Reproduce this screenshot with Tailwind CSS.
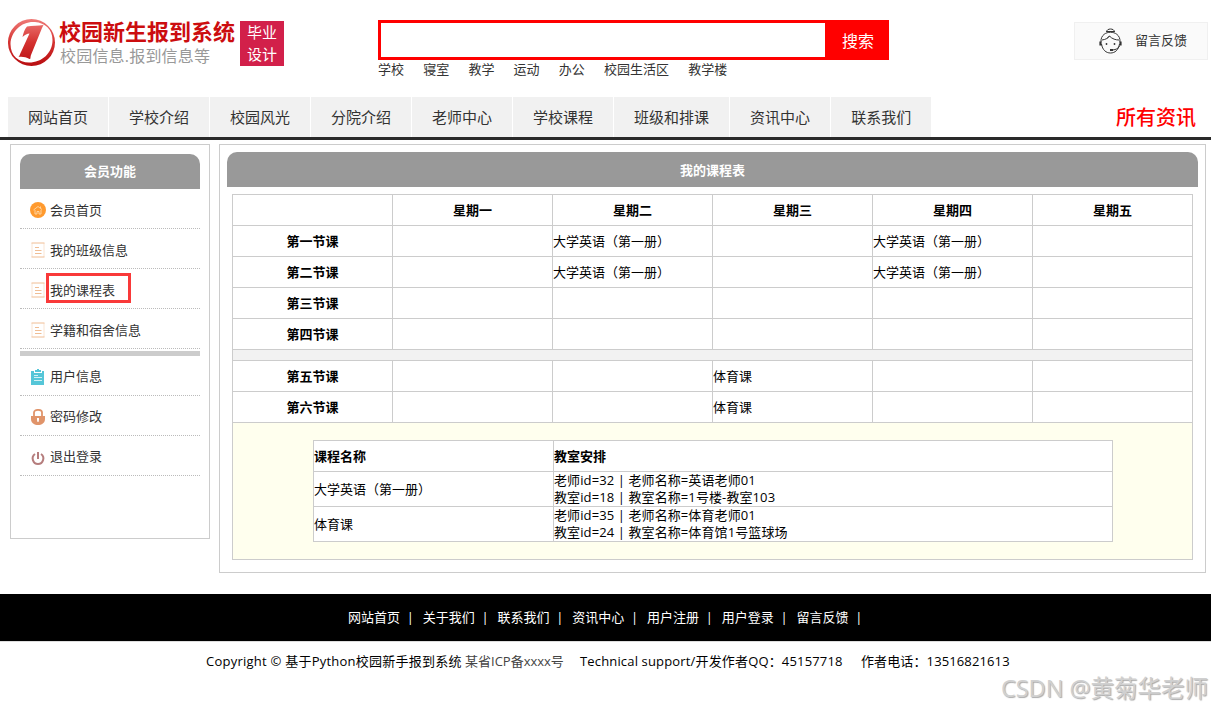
<!DOCTYPE html>
<html lang="zh-CN">
<head>
    <meta charset="UTF-8">
    <meta name="viewport" content="width=device-width, initial-scale=1.0">
    <title>校园新生报到系统</title>
    <script src="https://cdn.jsdelivr.net/npm/@tailwindcss/browser@4"></script>
</head>
<body class="h-[708px] bg-white text-black text-[13px] leading-[17px] font-['Open_Sans','Noto_Sans_CJK_SC',sans-serif] overflow-hidden">

    <!-- Header -->
    <header class="h-[97px] flex items-start pl-2 pr-[3px]">
        <a href="#" class="flex w-[370px] pt-[19px]">
            <svg class="w-12 h-12 shrink-0" viewBox="0 0 48 48">
                <defs>
                    <linearGradient id="logo-red" gradientUnits="userSpaceOnUse" x1="0" y1="0" x2="0" y2="47">
                        <stop offset="0" stop-color="#ef7b78"/>
                        <stop offset="0.5" stop-color="#d43230"/>
                        <stop offset="1" stop-color="#b80d10"/>
                    </linearGradient>
                </defs>
                <path fill="url(#logo-red)" fill-rule="evenodd" d="M23.500 0A23.500 23.500 0 1 1 23.500 47A23.500 23.500 0 1 1 23.500 0ZM27 3C14 2 3 12 2.500 25C2.500 37 11 43.500 21 43.500C34 43.500 44.500 34 44.500 21C44.500 10 37 4 27 3Z"/>
                <path fill="url(#logo-red)" d="M19 7.500C24 6.500 30 7 35.500 6C34.500 8 34 9 33 11.500L23 36C22 39 23 40 21.500 40C18 38 14 37.500 10.500 38C12 36 12 35 13 33L21.500 14.500C19 14.500 17 16 14.500 18C15.500 14 16.500 10 19 7.500Z"/>
            </svg>
            <div class="ml-[3px] w-[181px] whitespace-nowrap">
                <div class="text-[22px] leading-[24px] font-bold text-[#cc0d0f]">校园新生报到系统</div>
                <div class="ml-px text-[16px] leading-[26px] tracking-[0.2px] text-[#999]">校园信息.报到信息等</div>
            </div>
            <div class="mt-[2px] w-[44px] h-[45px] bg-[#d2204a] text-white text-[15px] leading-[22px] text-center">毕业<br>设计</div>
        </a>
        <div class="w-[511px] pt-5">
            <div class="flex h-10">
                <input type="text" class="w-[447px] border-[3px] border-r-0 border-[#f00] outline-none">
                <button class="w-16 pl-[2px] pt-[2px] bg-[#f00] text-white text-[16px]">搜索</button>
            </div>
            <div class="flex gap-[19.200px] text-[#333] leading-[18px]">
                <a href="#">学校</a>
                <a href="#">寝室</a>
                <a href="#">教学</a>
                <a href="#">运动</a>
                <a href="#">办公</a>
                <a href="#">校园生活区</a>
                <a href="#">教学楼</a>
            </div>
        </div>
        <a href="#" class="ml-auto mt-[22px] w-[134px] h-[38px] flex items-center bg-[#fafafa] border border-[#f0f0f0] pl-6 pb-px text-[#333]">
            <svg class="w-[23px] h-[26px] mr-[13px]" viewBox="0 0 23 26" fill="none" stroke="#333" stroke-width="1">
                <path d="M7.500 4C7.500 0 15.500 0 15.500 4M7.500 3.500H15.500"/>
                <path d="M2 14C1 1 22 1 21 14M2.500 16C3.500 22 7 25 11.500 25S19.500 22 20.500 16"/>
                <path d="M3 12C7 11.500 9 10 10.500 8C13 11 17 12 20 12M8 10.500L10.500 8"/>
                <path d="M1.500 13.500V17.500M21.500 13.500V17.500" stroke-width="2.200"/>
                <path d="M20.500 18C19 21 16 22 12.500 22"/>
                <path d="M11 22H14" stroke-width="2"/>
                <circle cx="7.500" cy="16" r="0.900" fill="#333" stroke="none"/>
                <circle cx="15.500" cy="16" r="0.900" fill="#333" stroke="none"/>
            </svg>
            留言反馈
        </a>
    </header>

    <!-- Main nav -->
    <nav class="h-[43px] flex gap-px pl-2 pr-[15px] border-b-[3px] border-[#2a2a2a] text-[15px] leading-[40px] text-[#333]">
        <a href="#" class="px-5 bg-[#f1f1f1]">网站首页</a>
        <a href="#" class="px-5 bg-[#f1f1f1]">学校介绍</a>
        <a href="#" class="px-5 bg-[#f1f1f1]">校园风光</a>
        <a href="#" class="px-5 bg-[#f1f1f1]">分院介绍</a>
        <a href="#" class="px-5 bg-[#f1f1f1]">老师中心</a>
        <a href="#" class="px-5 bg-[#f1f1f1]">学校课程</a>
        <a href="#" class="px-5 bg-[#f1f1f1]">班级和排课</a>
        <a href="#" class="px-5 bg-[#f1f1f1]">资讯中心</a>
        <a href="#" class="px-5 bg-[#f1f1f1]">联系我们</a>
        <a href="#" class="ml-auto text-[20px] leading-[42px] font-medium text-[#f00]">所有资讯</a>
    </nav>

    <main class="flex items-start gap-[9px] pl-[10px] pt-1 h-[454px]">
        <!-- Member menu -->
        <aside class="w-[200px] h-[395px] border border-[#ccc] px-[9px] pt-[9px] text-[#333]">
            <h2 class="h-[35px] rounded-t-[10px] bg-[#999] text-white font-bold text-center leading-[35px]">会员功能</h2>
            <a href="#" class="flex items-center h-10 pl-[10px] pt-[3px] border-b border-dotted border-[#bbb]">
                <svg class="w-4 h-4 mr-1" viewBox="0 0 16 16">
                    <circle cx="8" cy="8" r="8" fill="#ff9a2e"/>
                    <path d="M3.500 8L8 4.500L12 7.500M5 8V12H7V9.500H9V12H11V8M10.500 6V4.500" fill="none" stroke="#ffd9a8" stroke-width="0.900"/>
                </svg>
                会员首页
            </a>
            <a href="#" class="flex items-center h-10 pl-[10px] pt-[3px] border-b border-dotted border-[#bbb]">
                <svg class="w-4 h-4 mr-1" viewBox="0 0 16 16" fill="none" stroke="#f0bd94">
                    <path d="M2 1V15M14 1V15" stroke="#fae5d4"/>
                    <path d="M1.500 1H14.500M1.500 15H14.500M5 5.500H9M5 8.500H11.500M5 11.500H11.500"/>
                </svg>
                我的班级信息
            </a>
            <a href="#" class="relative flex items-center h-10 pl-[10px] pt-[3px] border-b border-dotted border-[#bbb]">
                <svg class="w-4 h-4 mr-1" viewBox="0 0 16 16" fill="none" stroke="#f0bd94">
                    <path d="M2 1V15M14 1V15" stroke="#fae5d4"/>
                    <path d="M1.500 1H14.500M1.500 15H14.500M5 5.500H9M5 8.500H11.500M5 11.500H11.500"/>
                </svg>
                我的课程表
                <span class="absolute left-[26px] top-1 w-[85px] h-[30px] border-[3px] border-[#f93939]"></span>
            </a>
            <a href="#" class="flex items-center h-10 pl-[10px] pt-[3px] border-b border-dotted border-[#bbb]">
                <svg class="w-4 h-4 mr-1" viewBox="0 0 16 16" fill="none" stroke="#f0bd94">
                    <path d="M2 1V15M14 1V15" stroke="#fae5d4"/>
                    <path d="M1.500 1H14.500M1.500 15H14.500M5 5.500H9M5 8.500H11.500M5 11.500H11.500"/>
                </svg>
                学籍和宿舍信息
            </a>
            <div class="mt-[2px] h-[5px] bg-[#ccc]"></div>
            <a href="#" class="flex items-center h-10 pl-[10px] pt-[2px] border-b border-dotted border-[#bbb]">
                <svg class="w-4 h-4 mr-1" viewBox="0 0 16 16">
                    <path fill="#55c6d8" d="M1 2H4V4H12V2H14V16H1ZM5 1H7V0H9V1H11V3H5Z"/>
                    <path d="M4 6.500H8M4 8.500H12M4 11.500H12" stroke="#d3f1f5"/>
                </svg>
                用户信息
            </a>
            <a href="#" class="flex items-center h-10 pl-[10px] pt-[2px] border-b border-dotted border-[#bbb]">
                <svg class="w-4 h-4 mr-1" viewBox="0 0 16 16">
                    <path d="M4 8V3.500C4 0 12 0 12 3.500V8" fill="none" stroke="#e0946a" stroke-width="1.800"/>
                    <path d="M1 7H15V10C15 18 1 18 1 10Z" fill="#e0946a"/>
                    <path d="M7 9H9V11L8.500 13H7.500L7 11Z" fill="#fff"/>
                </svg>
                密码修改
            </a>
            <a href="#" class="flex items-center h-10 pl-[10px] pt-[2px] border-b border-dotted border-[#bbb]">
                <svg class="w-4 h-4 mr-1" viewBox="0 0 16 16" fill="none" stroke="#b57d7d" stroke-width="2">
                    <path d="M5 5C0.500 8 3 15 8 15S15.500 8 11 5M8 3V10"/>
                </svg>
                退出登录
            </a>
        </aside>

        <!-- Timetable -->
        <section class="w-[987px] h-[429px] border border-[#ccc] px-[7px] pt-[7px]">
            <h2 class="h-[35px] rounded-t-[10px] bg-[#999] text-white font-bold text-center leading-[36px]">我的课程表</h2>
            <div class="mt-[7px] ml-[5px] w-[961px] grid grid-cols-6 border-l border-t border-[#ccc] leading-[31px] *:h-[31px] *:border-r *:border-b *:border-[#ccc]">
                <div></div>
                <div class="font-bold text-center">星期一</div>
                <div class="font-bold text-center">星期二</div>
                <div class="font-bold text-center">星期三</div>
                <div class="font-bold text-center">星期四</div>
                <div class="font-bold text-center">星期五</div>

                <div class="font-bold text-center">第一节课</div>
                <div></div>
                <div>大学英语（第一册）</div>
                <div></div>
                <div>大学英语（第一册）</div>
                <div></div>

                <div class="font-bold text-center">第二节课</div>
                <div></div>
                <div>大学英语（第一册）</div>
                <div></div>
                <div>大学英语（第一册）</div>
                <div></div>

                <div class="font-bold text-center">第三节课</div>
                <div></div>
                <div></div>
                <div></div>
                <div></div>
                <div></div>

                <div class="font-bold text-center">第四节课</div>
                <div></div>
                <div></div>
                <div></div>
                <div></div>
                <div></div>
            </div>
            <!-- noon break -->
            <div class="ml-[5px] w-[961px] h-[11px] bg-[#f2f2f2] border-x border-b border-[#ccc]"></div>
            <div class="ml-[5px] w-[961px] grid grid-cols-6 border-l border-[#ccc] leading-[31px] *:h-[31px] *:border-r *:border-b *:border-[#ccc]">
                <div class="font-bold text-center">第五节课</div>
                <div></div>
                <div></div>
                <div>体育课</div>
                <div></div>
                <div></div>

                <div class="font-bold text-center">第六节课</div>
                <div></div>
                <div></div>
                <div>体育课</div>
                <div></div>
                <div></div>
            </div>
            <div class="ml-[5px] w-[961px] h-[137px] bg-[#ffffee] border-x border-b border-[#ccc] pt-[17px] pl-20">
                <div class="w-[800px] grid grid-cols-[240px_559px] bg-white border-l border-t border-[#ccc] *:border-r *:border-b *:border-[#ccc]">
                    <div class="h-[31px] font-bold leading-[31px]">课程名称</div>
                    <div class="h-[31px] font-bold leading-[31px]">教室安排</div>
                    <div class="h-[35px] leading-[35px]">大学英语（第一册）</div>
                    <div class="h-[35px] leading-[17px] tracking-[0.100px]">老师id=32 | 老师名称=英语老师01<br>教室id=18 | 教室名称=1号楼-教室103</div>
                    <div class="h-[35px] leading-[35px]">体育课</div>
                    <div class="h-[35px] leading-[17px] tracking-[0.100px]">老师id=35 | 老师名称=体育老师01<br>教室id=24 | 教室名称=体育馆1号篮球场</div>
                </div>
            </div>
        </section>
    </main>

    <!-- Footer -->
    <footer class="relative h-[114px]">
        <div class="h-12 flex pl-[348px] bg-black border-b border-[#ddd] text-white leading-[47px] *:w-[74.75px]">
            <div>网站首页 &nbsp;|</div>
            <div>关于我们 &nbsp;|</div>
            <div>联系我们 &nbsp;|</div>
            <div>资讯中心 &nbsp;|</div>
            <div>用户注册 &nbsp;|</div>
            <div>用户登录 &nbsp;|</div>
            <div>留言反馈 &nbsp;|</div>
        </div>
        <div class="flex pl-[206px] pt-[10px] leading-[19px] whitespace-nowrap">
            <span class="w-[259px] tracking-[0.240px]">Copyright © 基于Python校园新手报到系统</span>
            <a href="#" class="w-[115px] text-[#444]">某省ICP备xxxx号</a>
            <span class="w-[281px] tracking-[0.160px]">Technical support/开发作者QQ：45157718</span>
            <span class="tracking-[0.120px]">作者电话：13516821613</span>
        </div>
        <div class="absolute right-[3px] top-[79px] text-[23.500px] leading-[30px] text-[#d0d0d0] [text-shadow:1px_1px_1px_#aaa] whitespace-nowrap">CSDN @黄菊华老师</div>
    </footer>

</body>
</html>
